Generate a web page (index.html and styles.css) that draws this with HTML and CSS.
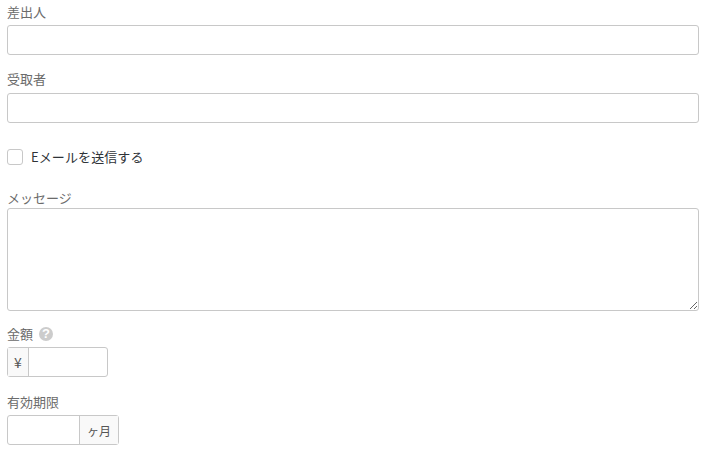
FILE: index.html
```html
<!DOCTYPE html>
<html lang="ja">
<head>
  <meta charset="UTF-8" />
  <title>ギフト</title>
  <link rel="stylesheet" href="styles.css">
</head>
<body>

<form class="gift-form">
  <div class="field field-sender">
    <label class="field-label" for="sender">差出人</label>
    <input class="text-input" type="text" id="sender">
  </div>

  <div class="field field-receiver">
    <label class="field-label" for="receiver">受取者</label>
    <input class="text-input" type="text" id="receiver">
  </div>

  <label class="check-row" for="sendMail">
    <input type="checkbox" id="sendMail">
    <span class="check-box"></span>
    <span class="check-text">Eメールを送信する</span>
  </label>

  <div class="field field-message">
    <label class="field-label" for="message">メッセージ</label>
    <textarea class="text-area" id="message"></textarea>
  </div>

  <div class="field field-amount">
    <label class="field-label" for="amount">金額 <span class="help-icon">?</span></label>
    <div class="input-group amount-group">
      <span class="addon addon-left">¥</span>
      <input class="group-input" type="text" id="amount">
    </div>
  </div>

  <div class="field">
    <label class="field-label" for="expires">有効期限</label>
    <div class="input-group expires-group">
      <input class="group-input" type="text" id="expires">
      <span class="addon addon-right">ヶ月</span>
    </div>
  </div>
</form>

</body>
</html>
```

FILE: styles.css
```css
html, body {
  margin: 0;
  background: #fff;
}

body {
  font-family: "Noto Sans CJK JP", "Noto Sans", sans-serif;
  font-size: 13px;
  color: #6b6b6b;
  overflow: hidden;
}

.gift-form {
  width: 692px;
  padding: 3px 0 0 7px;
}

.field-label {
  display: flex;
  align-items: center;
  gap: 6px;
  height: 18px;
  line-height: 18px;
  margin-bottom: 4px;
}

.field-sender {
  margin-bottom: 15px;
}

.field-receiver {
  margin-bottom: 26px;
}

.field-receiver .field-label {
  margin-bottom: 5px;
}

.text-input {
  display: block;
  width: 100%;
  height: 30px;
  box-sizing: border-box;
  border: 1px solid #c8c8c8;
  border-radius: 3px;
  background: #fff;
}

.check-row {
  display: flex;
  align-items: center;
  gap: 8px;
  height: 16px;
  color: #2f3338;
  font-size: 13px;
  letter-spacing: 0.1px;
  margin-bottom: 24px;
}

.check-row input {
  display: none;
}

.check-box {
  width: 16px;
  height: 16px;
  box-sizing: border-box;
  border: 1px solid #c8c8c8;
  border-radius: 3px;
}

.check-text {
  margin-bottom: 2px;
}

.field-message {
  margin-bottom: 14px;
}

.field-message .field-label {
  margin-bottom: 1px;
}

.text-area {
  display: block;
  width: 100%;
  height: 103px;
  box-sizing: border-box;
  border: 1px solid #c8c8c8;
  border-radius: 3px;
  background: #fff;
  margin: 0;
}

.help-icon {
  display: inline-block;
  width: 14px;
  height: 14px;
  border-radius: 50%;
  background: #ccc;
  color: #fff;
  font-family: "Liberation Sans", sans-serif;
  font-size: 13px;
  font-weight: bold;
  line-height: 14px;
  text-align: center;
}

.field-amount {
  margin-bottom: 16px;
}

.input-group {
  display: flex;
  height: 30px;
  box-sizing: border-box;
  border: 1px solid #c8c8c8;
  border-radius: 3px;
}

.amount-group {
  width: 101px;
}

.expires-group {
  width: 112px;
}

.group-input {
  flex: 1;
  min-width: 0;
  border: none;
  padding: 0;
  background: transparent;
}

.addon {
  display: flex;
  align-items: center;
  justify-content: center;
  background: #f9f9f9;
  color: #555;
  font-size: 12px;
}

.addon-left {
  width: 20px;
  font-size: 14px;
  border-right: 1px solid #c8c8c8;
}

.addon-right {
  width: 38px;
  border-left: 1px solid #c8c8c8;
}
```
